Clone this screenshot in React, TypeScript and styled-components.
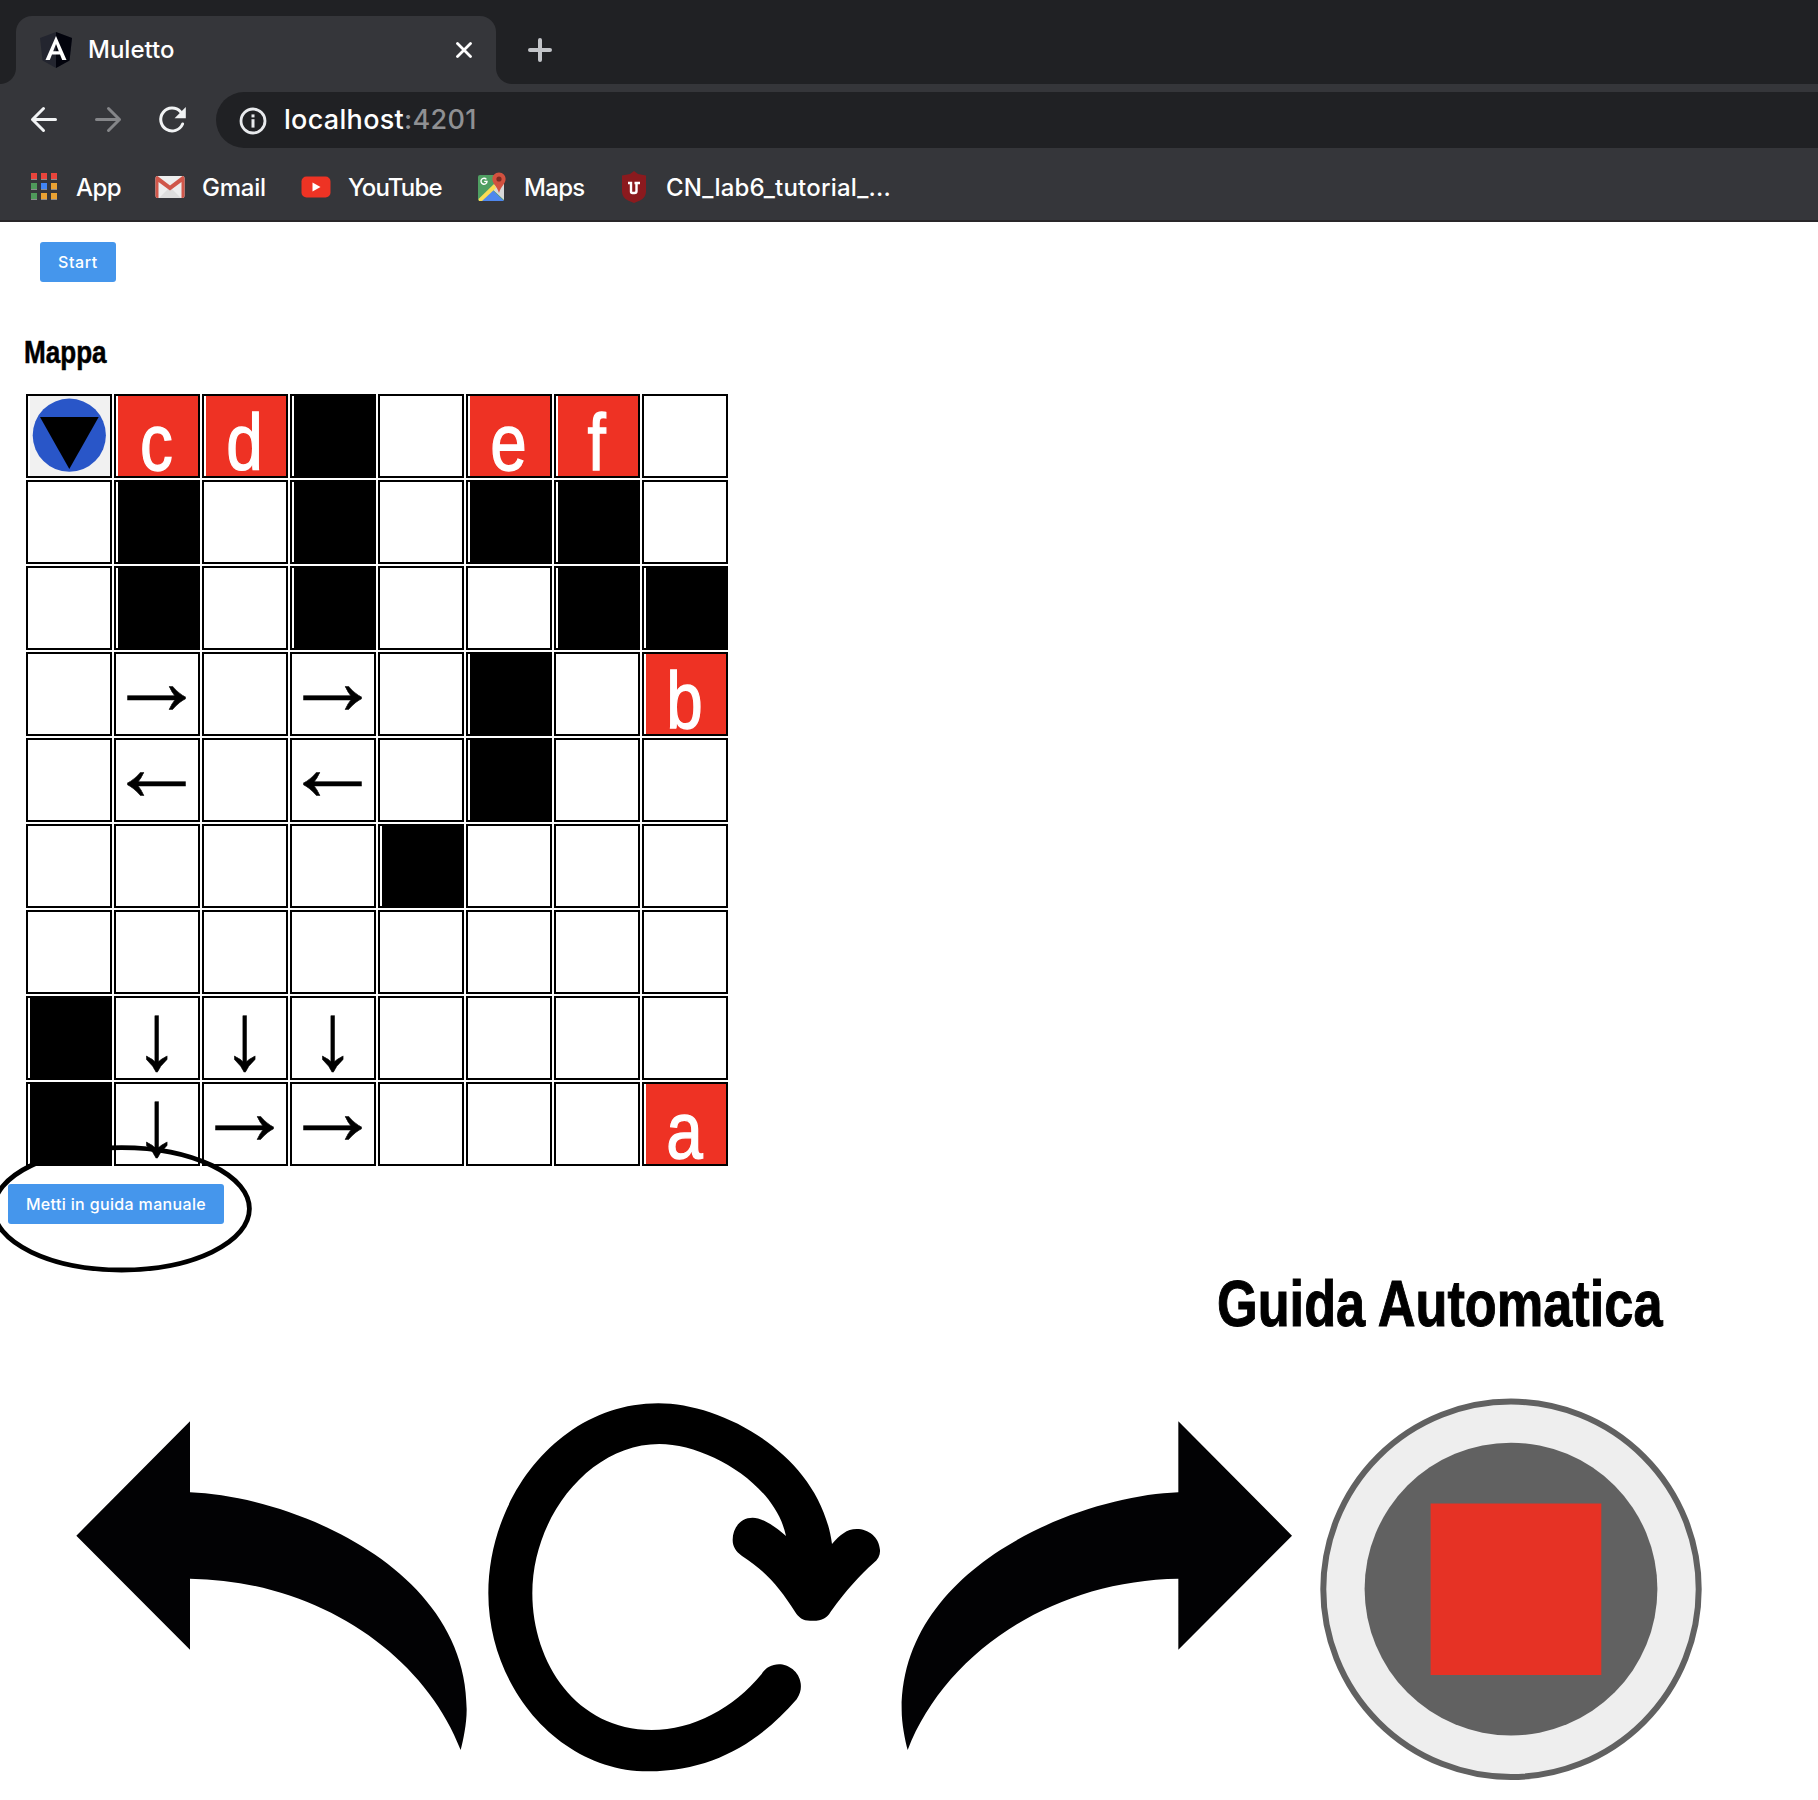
import React from "react";
import styled, { createGlobalStyle } from "styled-components";

const GlobalStyle = createGlobalStyle`
  html, body { margin: 0; padding: 0; background: #fff; }
  * { box-sizing: border-box; }
  svg { display: block; flex: none; }
`;

const Window = styled.div`
  position: relative;
  width: 1818px;
  height: 1800px;
  overflow: hidden;
  background: #fff;
  font-family: "Liberation Sans", Arial, sans-serif;
  color: #000;
`;

/* ---------- browser chrome ---------- */

const TabStrip = styled.div`
  display: flex;
  align-items: flex-end;
  height: 84px;
  background: #202124;
`;

const TabFoot = styled.div<{ $side: "left" | "right" }>`
  width: 16px;
  height: 16px;
  background: radial-gradient(
    circle at ${(p) => (p.$side === "left" ? "0 0" : "100% 0")},
    #202124 15.5px,
    #35363a 16.5px
  );
`;

const Tab = styled.div`
  display: flex;
  align-items: center;
  width: 480px;
  height: 68px;
  padding: 0 24px;
  border-radius: 16px 16px 0 0;
  background: #35363a;
`;

const Label = styled.span<{ $size: number; $spacing?: number; $color?: string }>`
  font-family: Inter, "Liberation Sans", sans-serif;
  font-size: ${(p) => p.$size}px;
  font-weight: 450;
  letter-spacing: ${(p) => p.$spacing ?? 0}px;
  color: ${(p) => p.$color ?? "#fff"};
  white-space: nowrap;
  line-height: 1.2;
`;

const TabTitle = styled(Label)`
  flex: 1;
  margin-left: 16px;
  padding-top: 1px;
`;

const NewTab = styled.div`
  height: 68px;
  display: flex;
  align-items: center;
  margin-left: 14px;
`;

const Toolbar = styled.div`
  display: flex;
  align-items: center;
  height: 72px;
  padding-left: 28px;
  background: #35363a;
`;

const NavButtons = styled.div`
  display: flex;
  gap: 32px;
  width: 188px;
`;

const Omnibox = styled.div`
  display: flex;
  align-items: center;
  flex: 1;
  height: 56px;
  padding: 1px 0 0 23px;
  gap: 17px;
  border-radius: 28px 0 0 28px;
  background: #202124;
`;

const Bookmarks = styled.div`
  display: flex;
  align-items: center;
  height: 66px;
  padding-bottom: 2px;
  background: #35363a;
  border-bottom: 2px solid #292629;
`;

const Bookmark = styled.div<{ $width: number; $gap: number; $inset?: number }>`
  display: flex;
  align-items: center;
  gap: ${(p) => p.$gap}px;
  width: ${(p) => p.$width}px;
  padding-left: ${(p) => p.$inset ?? 0}px;
  flex: none;

  ${Label} {
    padding-top: 2px;
  }
`;

const AppsGrid = styled.div`
  display: grid;
  grid-template-columns: repeat(3, 6px);
  grid-auto-rows: 7px;
  gap: 3px 4px;
`;

const AppDot = styled.i<{ $color: string }>`
  background: ${(p) => p.$color};
  border-bottom: 1px solid #8d8d8f;
`;

/* ---------- page ---------- */

const Page = styled.main`
  display: flex;
  flex-direction: column;
  align-items: flex-start;
  height: 1578px;
  padding-top: 20px;
`;

const Button = styled.button<{ $width: number }>`
  width: ${(p) => p.$width}px;
  height: 40px;
  padding: 0;
  border: 0;
  border-radius: 3px;
  background: #4596ec;
  color: #fff;
  font-family: Inter, "Liberation Sans", sans-serif;
  font-size: 16px;
  font-weight: 450;
  white-space: nowrap;
`;

const StartButton = styled(Button)`
  margin-left: 40px;
  letter-spacing: 0.6px;
`;

const ManualButton = styled(Button)`
  margin: 18px 0 0 8px;
  letter-spacing: 0.35px;
`;

const MapTitle = styled.h2`
  margin: 52px 0 0 24px;
  font-size: 32px;
  line-height: 37px;
  font-weight: 700;
  -webkit-text-stroke: 0.5px #000;
  transform: scaleX(0.815);
  transform-origin: 0 50%;
`;

const Grid = styled.div`
  display: grid;
  grid-template-columns: repeat(8, 86px);
  grid-auto-rows: 84px;
  gap: 2px;
  margin: 23px 0 0 26px;
`;

const Cell = styled.div`
  border: 2px solid #000;
  padding-left: 2px;
`;

const Wall = styled.div`
  width: 80px;
  height: 80px;
  background: #000;
`;

const Robot = styled.div`
  width: 80px;
  height: 80px;
  background: #f1f1f1;
`;

const Station = styled(Wall)`
  background: #ee3224;
  color: #fff;
`;

const Letter = styled.div`
  width: 77px;
  height: 80px;
  font-size: 80px;
  line-height: 93px;
  text-align: center;
  -webkit-text-stroke: 1.4px #fff;
  transform: scaleX(0.82);
`;

const HorizontalArrow = styled.div`
  width: 77px;
  display: flex;
  justify-content: center;
  font-size: 98px;
  line-height: 53px;
  -webkit-text-stroke: 0.5px #000;
`;

const VerticalArrow = styled.div`
  width: 77px;
  display: flex;
  justify-content: center;
  font-size: 95px;
  line-height: 76px;
  -webkit-text-stroke: 0.5px #000;
  transform: scaleX(0.93);
`;

const ModeTitle = styled.h1`
  margin: 43px 0 0 1217px;
  font-size: 64px;
  line-height: 74px;
  font-weight: 700;
  white-space: nowrap;
  -webkit-text-stroke: 1px #000;
  transform: scaleX(0.817);
  transform-origin: 0 50%;
`;

const Controls = styled.div`
  display: flex;
  align-items: flex-start;
  padding: 49px 0 0 50px;
`;

const Highlight = styled.svg`
  position: absolute;
  left: -12px;
  top: 1140px;
`;

const MAP = [
  "RcdX.ef.",
  ".X.X.XX.",
  ".X.X..XX",
  ".→.→.X.b",
  ".←.←.X..",
  "....X...",
  "........",
  "X↓↓↓....",
  "X↓→→...a",
];

function MapCell({ kind }: { kind: string }) {
  if (kind === ".") return <Cell />;
  if (kind === "X") return <Cell><Wall /></Cell>;
  if (kind === "R")
    return (
      <Cell>
        <Robot>
          <svg width="80" height="80" viewBox="0 0 80 80">
            <circle cx="39.3" cy="39.2" r="36.6" fill="#2956c8" />
            <path d="M10 21H68.7L39.3 73Z" fill="#000" />
          </svg>
        </Robot>
      </Cell>
    );
  if (kind === "↓") return <Cell><VerticalArrow>{kind}</VerticalArrow></Cell>;
  if (kind === "→" || kind === "←") return <Cell><HorizontalArrow>{kind}</HorizontalArrow></Cell>;
  return <Cell><Station><Letter>{kind}</Letter></Station></Cell>;
}

const CurvedArrow = ({ flip = false }: { flip?: boolean }) => (
  <svg width={flip ? 416 : 420} height="380" viewBox={flip ? "0 0 1248 1140" : "0 0 1260 1140"} overflow="visible">
    <path
      transform={flip ? "translate(1249 0) scale(-1 1)" : undefined}
      d="M79 437L420 94V307C720 318 1252 530 1250 960C1250 1000 1240 1050 1232 1080C1120 790 800 572 420 566V779Z"
      fill="#020204"
    />
  </svg>
);

const APP_COLORS = ["#e8453c", "#e8453c", "#e8453c", "#4f9a5b", "#4285f4", "#e9a233", "#4f9a5b", "#e9a233", "#e9a233"];

export default function App() {
  return (
    <Window>
      <GlobalStyle />
      <TabStrip>
        <TabFoot $side="left" />
        <Tab>
          <svg width="32" height="36" viewBox="0 0 32 36">
            <path d="M16 0L32 6L29.5 28.5L16 36L2.5 28.5L0 6Z" fill="#23252f" />
            <path d="M16 0L32 6L29.5 28.5L16 36Z" fill="#02030c" />
            <path d="M16 4L5.5 28H9.8L12 22.6H20L22.2 28H26.5ZM16 12L18.8 19.2H13.2Z" fill="#fff" fillRule="evenodd" />
          </svg>
          <TabTitle $size={24}>Muletto</TabTitle>
          <svg width="16" height="16" viewBox="0 0 16 16" stroke="#fff" strokeWidth="2.8" strokeLinecap="round">
            <path d="M1.5 1.5L14.5 14.5M14.5 1.5L1.5 14.5" />
          </svg>
        </Tab>
        <TabFoot $side="right" />
        <NewTab>
          <svg width="28" height="28" viewBox="0 0 28 28" stroke="#c3c5c9" strokeWidth="4" strokeLinecap="round">
            <path d="M4 14H24M14 4V24" />
          </svg>
        </NewTab>
      </TabStrip>

      <Toolbar>
        <NavButtons>
          <svg width="32" height="32" viewBox="0 0 32 32" fill="none" stroke="#f1f3f4" strokeWidth="3" strokeLinecap="round" strokeLinejoin="round">
            <path d="M27.5 15.5H4.5M15.5 4.5L4.5 15.5L15.5 26.5" />
          </svg>
          <svg width="32" height="32" viewBox="0 0 32 32" fill="none" stroke="#858689" strokeWidth="3" strokeLinecap="round" strokeLinejoin="round">
            <path d="M4.5 15.5H27.5M16.5 4.5L27.5 15.5L16.5 26.5" />
          </svg>
          <svg width="32" height="32" viewBox="0 0 32 32">
            <path d="M24.5 7.7A11.4 11.4 0 1 0 26.6 20" fill="none" stroke="#f1f3f4" strokeWidth="3" strokeLinecap="round" />
            <path d="M29.8 3V14.2H18.6Z" fill="#f1f3f4" />
          </svg>
        </NavButtons>
        <Omnibox>
          <svg width="28" height="28" viewBox="0 0 28 28">
            <circle cx="14" cy="14" r="12" fill="none" stroke="#e8eaed" strokeWidth="2.8" />
            <path d="M14 12.2V20.6" stroke="#e8eaed" strokeWidth="3" />
            <path d="M14 7.4V10.4" stroke="#e8eaed" strokeWidth="3" />
          </svg>
          <Label $size={27} $spacing={0.3}>
            localhost<Label as="span" $size={27} $spacing={0.3} $color="#8f9093">:4201</Label>
          </Label>
        </Omnibox>
      </Toolbar>

      <Bookmarks>
        <Bookmark $width={155} $gap={19} $inset={31}>
          <AppsGrid>{APP_COLORS.map((c, i) => <AppDot key={i} $color={c} />)}</AppsGrid>
          <Label $size={24} $spacing={-0.5}>App</Label>
        </Bookmark>
        <Bookmark $width={146} $gap={17}>
          <svg width="30" height="24" viewBox="0 0 30 24">
            <rect x="0.5" y="1" width="29" height="22" rx="2" fill="#eee" />
            <path d="M4 23L15 12L26 23Z" fill="#ddd" />
            <path d="M0.5 3Q0.5 1 2.5 1L15 10.5L27.5 1Q29.5 1 29.5 3V21Q29.5 23 27.5 23H26.5V7L15 15.5L3.5 7V23H2.5Q0.5 23 0.5 21Z" fill="#d0574a" />
          </svg>
          <Label $size={24} $spacing={-0.25}>Gmail</Label>
        </Bookmark>
        <Bookmark $width={176} $gap={17}>
          <svg width="30" height="22" viewBox="0 0 30 22">
            <rect x="0.5" y="0.5" width="29" height="21" rx="5" fill="#ee3324" />
            <path d="M11.5 6.5L19.5 11L11.5 15.5Z" fill="#fff" />
          </svg>
          <Label $size={24} $spacing={-0.85}>YouTube</Label>
        </Bookmark>
        <Bookmark $width={145} $gap={17}>
          <svg width="30" height="32" viewBox="0 0 30 32">
            <rect x="1" y="4" width="26" height="26" rx="2" fill="#4f9f62" />
            <path d="M14 17L27 29V9L20 11Z" fill="#d8d8d8" />
            <path d="M2 30L14.5 18L27 30Z" fill="#4f87ed" />
            <path d="M1.5 28L17 13L19 17L5 30H2Z" fill="#fbdc55" />
            <path d="M9.4 8.4A3 3 0 1 0 10 10.4H7.2" fill="none" stroke="#fff" strokeWidth="1.4" />
            <path d="M22 1.5C18 1.5 15.4 4.5 15.4 8C15.4 13 20 15 22 22C24 15 28.6 13 28.6 8C28.6 4.5 26 1.5 22 1.5Z" fill="#d2513f" />
            <circle cx="22" cy="8" r="2.6" fill="#7d2b22" />
          </svg>
          <Label $size={24} $spacing={-0.7}>Maps</Label>
        </Bookmark>
        <Bookmark $width={300} $gap={20}>
          <svg width="24" height="32" viewBox="0 0 24 32">
            <path d="M12 0L16 3L24 4.5V21Q23.5 27 18 29.5L12 32L6 29.5Q0.5 27 0 21V4.5L8 3Z" fill="#8b1a1e" />
            <path d="M6 12H9V20.5Q9 22 10.5 22H12.5Q14.5 22 14.5 20V12H18M12.5 12H14.5" fill="none" stroke="#fff" strokeWidth="2.4" />
          </svg>
          <Label $size={24} $spacing={0.2}>CN_lab6_tutorial_...</Label>
        </Bookmark>
      </Bookmarks>

      <Page>
        <StartButton $width={76}>Start</StartButton>
        <MapTitle>Mappa</MapTitle>
        <Grid>
          {MAP.flatMap((row, y) => [...row].map((kind, x) => <MapCell key={`${y}-${x}`} kind={kind} />))}
        </Grid>
        <ManualButton $width={216}>Metti in guida manuale</ManualButton>
        <ModeTitle>Guida Automatica</ModeTitle>
        <Controls>
          <CurvedArrow />
          <svg width="432" height="400" viewBox="30 30 1296 1200">
            <path
              d="M1116 492C1080 225 790 70 595 70C300 70 85 350 85 640C85 925 300 1174 565 1174C760 1174 900 1085 1010 958C1022 940 1024 925 1022 910C1018 875 985 853 957 853C935 853 915 865 905 882C820 985 700 1050 575 1050C350 1050 217 850 217 640C217 410 390 192 598 192C740 192 945 310 978 468C940 435 905 413 878 413C840 413 818 445 818 480C818 500 828 515 845 527C920 575 960 625 1005 695C1015 712 1030 722 1050 722C1085 724 1100 715 1112 695C1160 630 1200 585 1240 550C1255 538 1261 525 1260 510C1257 470 1225 447 1190 447C1160 447 1140 465 1116 492Z"
              fill="#000"
            />
          </svg>
          <CurvedArrow flip />
          <svg width="400" height="400" viewBox="0 0 400 400">
            <circle cx="193" cy="199.3" r="187.7" fill="#eee" stroke="#616161" strokeWidth="6" />
            <circle cx="193" cy="199.1" r="146.4" fill="#616161" />
            <rect x="112.6" y="113.5" width="170.7" height="171.5" fill="#e63225" />
          </svg>
        </Controls>
      </Page>

      <Highlight width="270" height="140" viewBox="0 0 270 140">
        <ellipse cx="133.6" cy="68.8" rx="127.8" ry="61.2" fill="none" stroke="#000" strokeWidth="4.8" />
      </Highlight>
    </Window>
  );
}
